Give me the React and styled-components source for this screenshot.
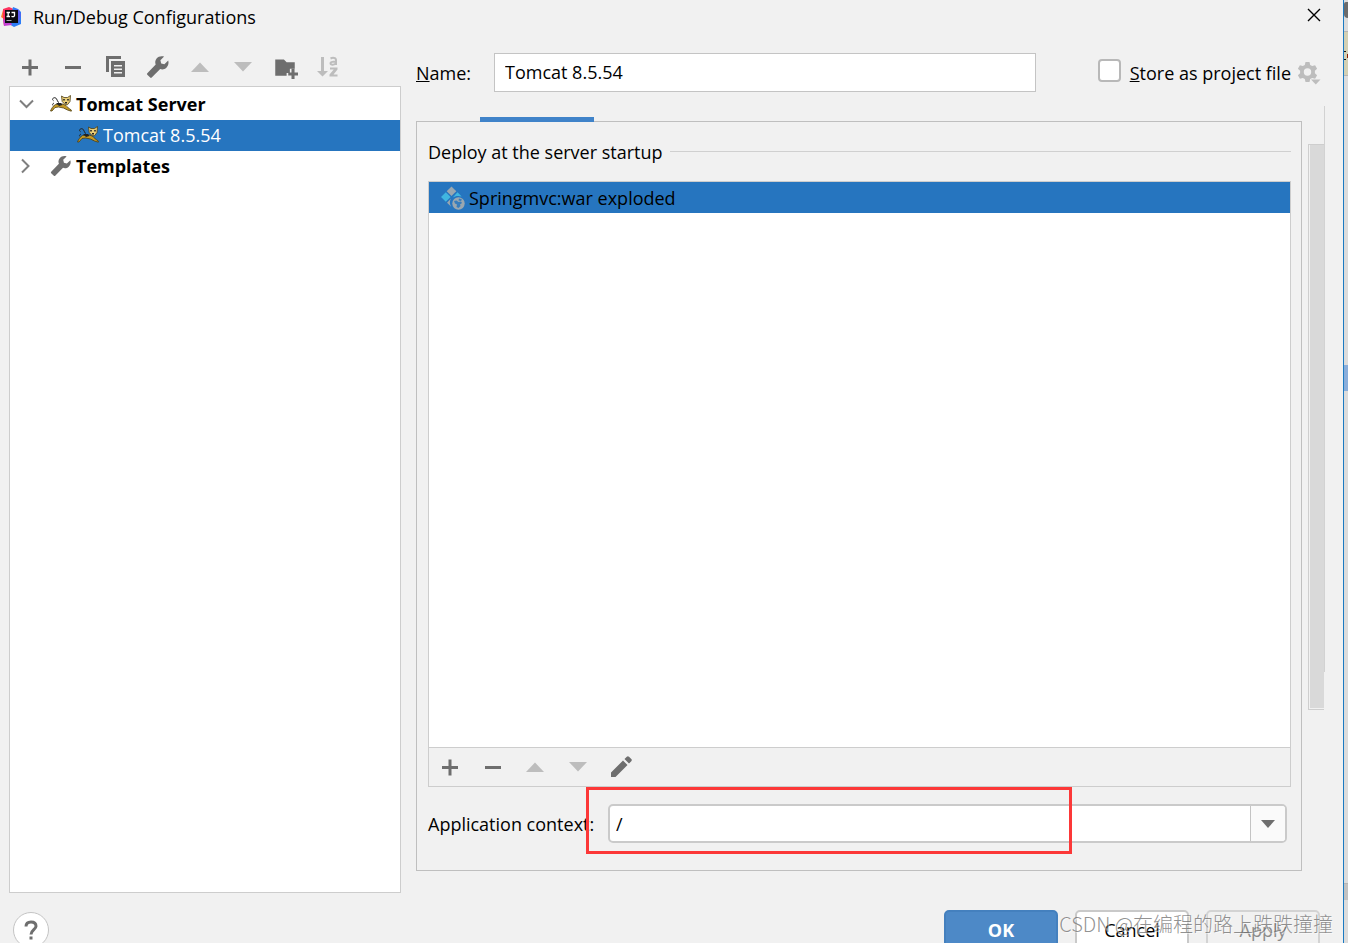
import React, { useState } from 'react'
import styled, { createGlobalStyle } from 'styled-components'

const GlobalStyle = createGlobalStyle`
  * {
    box-sizing: border-box;
  }
  body {
    margin: 0;
    background-color: #f1f1f1;
    font-family: "Open Sans", "Noto Sans", "Noto Sans CJK SC", sans-serif;
    font-size: 18px;
    line-height: 24px;
    color: #000;
  }
  button, input {
    font: inherit;
    color: inherit;
  }
`

const Screen = styled.div`
  display: flex;
  height: 100vh;
  overflow: hidden;
`

const Dialog = styled.div`
  position: relative;
  flex: 1;
  min-width: 0;
  display: flex;
  flex-direction: column;
  background-color: #f1f1f1;
  border-right: 1px solid #1b7ac2;
`

const TitleBar = styled.header`
  display: flex;
  align-items: center;
  gap: 11px;
  height: 34px;
  padding: 0 18px 0 1px;
`

const Title = styled.h1`
  flex: 1;
  margin: 0;
  font-size: 18px;
  font-weight: 400;
`

const IconButton = styled.button`
  display: flex;
  align-items: center;
  justify-content: center;
  padding: 0;
  border: 0;
  background: none;
  color: ${(props) => (props.$muted ? '#bdbdbd' : '#6e6e6e')};
`

const CloseButton = styled(IconButton)`
  height: 22px;
  align-self: flex-start;
  margin-top: 4px;
  color: #000;
`

const Body = styled.main`
  flex: 1;
  min-height: 0;
  display: grid;
  grid-template-columns: 392px 1fr;
  gap: 15px;
  padding: 14px 18px 0 9px;
`

const Sidebar = styled.aside`
  display: flex;
  flex-direction: column;
`

const Toolbar = styled.div`
  display: grid;
  grid-template-columns: repeat(8, 1fr);
  width: 340px;
  height: 38px;
`

const Tree = styled.ul`
  flex: 1;
  margin: 0;
  padding: 2px 0 0;
  list-style: none;
  background-color: #fff;
  border: 1px solid #cdcdcd;
`

const TreeRow = styled.li`
  display: flex;
  align-items: center;
  gap: 4px;
  height: 31px;
  padding: 0 0 1px ${(props) => (props.$child ? '67px' : '8px')};
  font-weight: ${(props) => (props.$child ? 400 : 700)};
  background-color: ${(props) => (props.$selected ? '#2675bf' : 'transparent')};
  color: ${(props) => (props.$selected ? '#fff' : '#000')};
`

const TreeIcon = styled.span`
  display: flex;
  color: #6e6e6e;
`

const Chevron = styled(IconButton)`
  width: 18px;
  margin-right: 10px;
  color: #7f7f7f;
`

const Settings = styled.section`
  display: flex;
  flex-direction: column;
  min-width: 0;
  min-height: 0;
`

const NameRow = styled.div`
  display: flex;
  align-items: center;
  height: 58px;
  padding: 5px 4px 14px 0;
`

const NameLabel = styled.label`
  width: 78px;
`

const NameInput = styled.input`
  flex: 1;
  min-width: 0;
  height: 39px;
  padding: 0 10px 1px;
  background-color: #fff;
  border: 1px solid #c4c4c4;
  outline: 0;
`

const StoreLabel = styled.label`
  display: flex;
  align-items: center;
  gap: 9px;
  margin: 0 6px 0 62px;
  white-space: nowrap;
`

const CheckBox = styled.input`
  appearance: none;
  width: 23px;
  height: 23px;
  margin: 0 0 5px;
  background-color: #fff;
  border: 2px solid #b8b8b8;
  border-radius: 4px;
`

const Pane = styled.div`
  flex: 1;
  min-height: 0;
  display: flex;
  gap: 6px;
  padding-bottom: 22px;
`

const PaneContent = styled.div`
  flex: 1;
  min-width: 0;
  display: flex;
  flex-direction: column;
`

const TabMark = styled.div`
  z-index: 1;
  width: 114px;
  height: 5px;
  margin: 11px 0 -1px 64px;
  background-color: #4083c9;
`

const Panel = styled.div`
  flex: 1;
  min-height: 0;
  display: flex;
  flex-direction: column;
  padding: 0 10px 0 11px;
  border: 1px solid #bfbfbf;
`

const SectionTitle = styled.h2`
  display: flex;
  align-items: center;
  gap: 7px;
  height: 59px;
  margin: 0;
  font-size: 18px;
  font-weight: 400;
  white-space: nowrap;
  &::after {
    content: "";
    flex: 1;
    height: 1px;
    background-color: #d0d0d0;
  }
`

const DeployBox = styled.div`
  flex: 1;
  min-height: 0;
  display: flex;
  flex-direction: column;
  border: 1px solid #cdcdcd;
`

const DeployList = styled.ul`
  flex: 1;
  margin: 0;
  padding: 0;
  list-style: none;
  background-color: #fff;
`

const DeployItem = styled.li`
  display: flex;
  align-items: center;
  gap: 4px;
  height: 31px;
  padding-left: 12px;
  background-color: #2675bf;
`

const DeployToolbar = styled.div`
  display: grid;
  grid-template-columns: repeat(5, 1fr);
  width: 213px;
  height: 38px;
`

const DeployActions = styled.div`
  border-top: 1px solid #cdcdcd;
`

const ContextRow = styled.div`
  position: relative;
  display: flex;
  align-items: center;
  padding: 17px 4px 27px 0;
`

const ContextLabel = styled.label`
  width: 180px;
`

const Combo = styled.div`
  flex: 1;
  display: flex;
  height: 39px;
  overflow: hidden;
  background-color: #fff;
  border: 2px solid #cacaca;
  border-radius: 5px;
`

const ComboInput = styled.input`
  flex: 1;
  min-width: 0;
  padding: 0 6px;
  background: none;
  border: 0;
  outline: 0;
`

const ComboButton = styled(IconButton)`
  width: 35px;
  background-color: #fafafa;
  border-left: 1px solid #c4c4c4;
`

const Highlight = styled.div`
  position: absolute;
  top: 0;
  left: 158px;
  width: 486px;
  height: 67px;
  border: 3px solid #fc3838;
  pointer-events: none;
`

const ScrollTrack = styled.div`
  width: 17px;
  height: 74%;
  padding-top: 38px;
  border-right: 1px solid #d2d2d2;
`

const ScrollThumb = styled.div`
  width: 16px;
  height: 566px;
  background-color: #d9d9d9;
  border: 1px solid #cecece;
  border-width: 1px 0 1px 1px;
  box-shadow: inset 1px -1px 0 #f1f1f1;
`

const Footer = styled.footer`
  display: flex;
  align-items: flex-start;
  gap: 17px;
  height: 50px;
  padding: 17px 23px 0 13px;
  overflow: hidden;
`

const HelpButton = styled.button`
  flex: none;
  display: flex;
  align-items: center;
  justify-content: center;
  width: 36px;
  height: 36px;
  margin: 2px auto 0 0;
  padding: 0;
  background-color: #fff;
  border: 1px solid #c4c4c4;
  border-radius: 50%;
  color: #6e6e6e;
`

const FooterButton = styled.button`
  flex: none;
  width: 114px;
  height: 40px;
  padding: 0;
  background-color: ${(props) => (props.$primary ? '#4d89c7' : '#fff')};
  border: 2px solid ${(props) => (props.$primary ? '#4480be' : '#c9c9c9')};
  border-radius: 5px;
  color: ${(props) => (props.$primary ? '#fff' : '#000')};
  font-weight: ${(props) => (props.$primary ? 700 : 400)};
  &:disabled {
    background-color: #f1f1f1;
    border-color: #d3d3d3;
    color: #8c8c8c;
  }
`

const Watermark = styled.div`
  position: absolute;
  right: 10px;
  bottom: 5px;
  font-family: "Noto Sans CJK SC", sans-serif;
  font-size: 20px;
  line-height: 28px;
  font-weight: 300;
  color: rgba(110, 110, 110, 0.75);
  text-shadow: 1px 1px 0 rgba(255, 255, 255, 0.6);
  white-space: nowrap;
  pointer-events: none;
`

const Behind = styled.div`
  flex: none;
  display: flex;
  flex-direction: column;
  width: 4px;
  background-color: #dcdcdc;
`

const Stripe = styled.div`
  flex: none;
  height: ${(props) => props.$height}px;
  margin-top: ${(props) => props.$gap || 0}px;
  background-color: ${(props) => props.$color};
`

const RoundStripe = styled(Stripe)`
  border-radius: 4px 0 0 8px;
`

const Glyph = ({ size = 24, children }) => (
  <svg width={size} height={size} viewBox="0 0 24 24" fill="currentColor">
    {children}
  </svg>
)

const PlusIcon = () => (
  <Glyph><path d="M10.500 4.500h3v6.500H20v3h-6.500v6.500h-3V14H4v-3h6.500z" /></Glyph>
)

const MinusIcon = () => (
  <Glyph><path d="M4 11h16v3H4z" /></Glyph>
)

const CopyIcon = () => (
  <Glyph>
    <path d="M3 1h15v3H6v13H3z" />
    <path fillRule="evenodd" d="M8 6h14v16H8zM11 10v1.500h8V10zM11 13.500V15h8v-1.500zM11 17v1.500h8V17z" />
  </Glyph>
)

const WrenchIcon = ({ size }) => (
  <Glyph size={size}>
    <path d="M22.200 5.600 18.400 9.200l-3.200-.8-.8-3.100 3.700-3.700C15.400.7 12.300 1.300 10.600 3.500 9.100 5.300 8.900 7.500 9.700 9.500L1.300 18.300c-.5.5-.5 1 0 1.500l2.900 2.800c.5.500 1 .5 1.500 0l8.500-8.600c2.100.8 4.400.4 6.200-1.300 2-1.900 2.600-4.700 1.800-7.100z" />
  </Glyph>
)

const UpIcon = () => (
  <Glyph><path d="M12 7.500 21 17H3z" /></Glyph>
)

const DownIcon = () => (
  <Glyph><path d="M3 7h18l-9 9.500z" /></Glyph>
)

const FolderIcon = () => (
  <Glyph size={26}>
    <path d="M3 5h8l2.500 2.500H21v6h-4.500v4h-3V20H3z" />
    <path d="M18 13.500h2.800V17H24v2.800h-3.200V23H18v-3.200h-3V17h3z" />
  </Glyph>
)

const SortIcon = () => (
  <Glyph>
    <path d="M5 2h3v14h4l-5.500 5.500L1 16h4z" />
    <path d="M14 12.500h7.500v2L17.500 19.500h4v2h-8v-2l4.200-5H14z" />
    <path fill="none" stroke="currentColor" strokeWidth="2" d="M14.500 3.500c2-1 5.500-1 5.500 1.500v5M20 6.500c-3 0-5.500 0-5.500 1.800 0 2.200 4 1.800 5.500-.3" />
  </Glyph>
)

const PencilIcon = () => (
  <Glyph>
    <path d="m14 5.500 4.500 4.500L6.500 22H2v-4.500zM15.500 4l2.300-2.300c.7-.7 1.500-.7 2.200 0L22.300 4c.7.7.7 1.500 0 2.200L20 8.500z" />
  </Glyph>
)

const GearIcon = () => (
  <Glyph>
    <path fillRule="evenodd" d="M8.500 1h4l.7 3 2 1.100 2.900-.9 2 3.500-2.200 2.100v2.400l2.200 2.100-2 3.500-2.900-.9-2 1.100-.7 3h-4l-.7-3-2-1.100-2.900.9-2-3.500 2.200-2.100V9.800L.9 7.700l2-3.500 2.900.9 2-1.100zM10.500 7.300a3.700 3.700 0 1 0 0 7.400 3.700 3.700 0 0 0 0-7.400z" />
    <path d="M14 18.500h9.500L18.800 23.500z" />
  </Glyph>
)

const ChevronIcon = ({ open }) => (
  <svg width="18" height="18" viewBox="0 0 18 18" fill="none" stroke="currentColor" strokeWidth="2">
    <path d={open ? 'M2 5.500 8.500 12l6.500-6.500' : 'M4 2.500 10.500 9 4 15.500'} />
  </svg>
)

const TomcatIcon = () => (
  <svg width="22" height="22" viewBox="0 0 22 22">
    <path fill="none" stroke="#222" strokeWidth="1" d="M9 9.500C7 9.500 7.500 5 5 4.700 3 4.500 1.500 6.500 3.500 7.700M4 10C3 10.500 2 11.500 3 12.500" />
    <path fill="#c49a26" stroke="#4d3d12" strokeWidth=".8" d="M.5 18c1-2.500 2.500-5 5-6.500l7-.5 3 1.200c1.500 1.500 3 3 5.800 4.800v1.200l-3.800-1.200-4-2-5-1-3.500.5-3 3.500z" />
    <path fill="#222" d="M6 10h5l1.500 2L9 13z" />
    <path fill="#e9cd77" stroke="#4d3d12" strokeWidth=".8" d="M11.500 3 14 4.500h3.500l3-2-.5 6-2.500 3.200h-2.200L12.200 8.500z" />
    <path fill="#222" d="M13.200 6h1.600v1.500h-1.600zM17.200 6h1.600v1.500h-1.600zM15 9h2v1.500h-2z" />
  </svg>
)

const ArtifactIcon = () => (
  <svg width="24" height="24" viewBox="0 0 24 24">
    <path fill="#9aa7b0" d="m10.500.5 4.800 4.800-4.800 4.700-4.800-4.700z" />
    <path fill="#40b6e0" d="m4.800 6.200 4.800 4.900-4.800 4.700L0 11.100zM16.500 6.200l4.200 4.300c-3.500-1-6.500-.5-9 1z" />
    <path fill="#9aa7b0" d="M10 12.500c-1.800 3-1.300 5.800.2 8.200L6 16.700z" />
    <circle cx="17.500" cy="17.500" r="6.200" fill="#9aa7b0" />
    <path fill="#2675bf" d="m13 15 2.500-.5 2 1.500 2.500-.5 1 1.500-2 1.500.5 1.500-2 2-2-1 .5-2.500-2-1zM18 12.500l3 1-1 1.500-2.500-.5z" opacity=".85" />
  </svg>
)

const IdeaIcon = () => (
  <svg width="21" height="22" viewBox="0 0 21 22">
    <path fill="#fc7a2e" d="M2 4 0 11l6 4 3-8z" />
    <path fill="#fe315d" d="M2 3 8 1l7 3-5 9-7 7-1-7z" />
    <path fill="#2c7df7" d="m12 1 5 2 3 3v12l-7 3-5-3z" />
    <path fill="#5b5cf0" d="m14 3 4 1 2 5-3 8z" />
    <path fill="#c13fd0" d="m2 13 7 2 2 4-8 1z" />
    <path fill="#0b0b12" d="M4 4h13v13H4z" />
    <path fill="none" stroke="#fff" strokeWidth="1.300" d="M5.500 6.500h3.500M7.200 6.500v4M5.500 10.500h3.500M10.500 6.500h3v3c0 1-1.500 1.500-3 .8" />
    <path fill="#aaa" d="M5.500 14h5v1h-5z" />
  </svg>
)

const App = () => {
  const [name, setName] = useState('Tomcat 8.5.54')
  const [context, setContext] = useState('/')

  return (
    <Screen>
      <GlobalStyle />
      <Dialog>
        <TitleBar>
          <IdeaIcon />
          <Title>Run/Debug Configurations</Title>
          <CloseButton aria-label="Close">
            <svg width="22" height="22" viewBox="0 0 22 22" stroke="currentColor" strokeWidth="1.400">
              <path d="m5 5 12 12M17 5 5 17" />
            </svg>
          </CloseButton>
        </TitleBar>

        <Body>
          <Sidebar>
            <Toolbar>
              <IconButton aria-label="Add"><PlusIcon /></IconButton>
              <IconButton aria-label="Remove"><MinusIcon /></IconButton>
              <IconButton aria-label="Copy"><CopyIcon /></IconButton>
              <IconButton aria-label="Edit templates"><WrenchIcon /></IconButton>
              <IconButton aria-label="Move up" $muted><UpIcon /></IconButton>
              <IconButton aria-label="Move down" $muted><DownIcon /></IconButton>
              <IconButton aria-label="New folder"><FolderIcon /></IconButton>
              <IconButton aria-label="Sort" $muted><SortIcon /></IconButton>
            </Toolbar>
            <Tree>
              <TreeRow>
                <Chevron aria-label="Collapse"><ChevronIcon open /></Chevron>
                <TreeIcon><TomcatIcon /></TreeIcon>
                <span>Tomcat Server</span>
              </TreeRow>
              <TreeRow $child $selected>
                <TreeIcon><TomcatIcon /></TreeIcon>
                <span>Tomcat 8.5.54</span>
              </TreeRow>
              <TreeRow>
                <Chevron aria-label="Expand"><ChevronIcon /></Chevron>
                <TreeIcon><WrenchIcon size={22} /></TreeIcon>
                <span>Templates</span>
              </TreeRow>
            </Tree>
          </Sidebar>

          <Settings>
            <NameRow>
              <NameLabel htmlFor="name"><u>N</u>ame:</NameLabel>
              <NameInput id="name" value={name} onChange={(e) => setName(e.target.value)} />
              <StoreLabel>
                <CheckBox type="checkbox" />
                <span><u>S</u>tore as project file</span>
              </StoreLabel>
              <IconButton aria-label="Storage options" $muted><GearIcon /></IconButton>
            </NameRow>
            <Pane>
              <PaneContent>
                <TabMark />
                <Panel>
                  <SectionTitle>Deploy at the server startup</SectionTitle>
                  <DeployBox>
                    <DeployList>
                      <DeployItem>
                        <ArtifactIcon />
                        <span>Springmvc:war exploded</span>
                      </DeployItem>
                    </DeployList>
                    <DeployActions>
                      <DeployToolbar>
                        <IconButton aria-label="Add artifact"><PlusIcon /></IconButton>
                        <IconButton aria-label="Remove artifact"><MinusIcon /></IconButton>
                        <IconButton aria-label="Move artifact up" $muted><UpIcon /></IconButton>
                        <IconButton aria-label="Move artifact down" $muted><DownIcon /></IconButton>
                        <IconButton aria-label="Edit artifact"><PencilIcon /></IconButton>
                      </DeployToolbar>
                    </DeployActions>
                  </DeployBox>
                  <ContextRow>
                    <ContextLabel htmlFor="context">Application context:</ContextLabel>
                    <Combo>
                      <ComboInput id="context" value={context} onChange={(e) => setContext(e.target.value)} />
                      <ComboButton aria-label="Show contexts">
                        <svg width="14" height="8" viewBox="0 0 14 8" fill="currentColor"><path d="M0 0h14L7 8z" /></svg>
                      </ComboButton>
                    </Combo>
                    <Highlight />
                  </ContextRow>
                </Panel>
              </PaneContent>
              <ScrollTrack>
                <ScrollThumb />
              </ScrollTrack>
            </Pane>
          </Settings>
        </Body>

        <Footer>
          <HelpButton aria-label="Help">
            <svg width="14" height="20" viewBox="0 0 14 20" fill="none" stroke="currentColor" strokeWidth="3">
              <path d="M2 6.500C2 3.500 4 2 7 2s5 1.500 5 4.200c0 3.300-5 3.800-5 8.300M7 16.500v3" />
            </svg>
          </HelpButton>
          <FooterButton $primary>OK</FooterButton>
          <FooterButton>Cancel</FooterButton>
          <FooterButton disabled>Apply</FooterButton>
        </Footer>
        <Watermark>CSDN @在编程的路上跌跌撞撞</Watermark>
      </Dialog>
      <Behind>
        <RoundStripe $height={16} $gap={2} $color="#6b6b6b" />
        <Stripe $height={1} $gap={13} $color="#b5b5b5" />
        <Stripe $height={43} $color="#d3d0b4">
          <svg width="4" height="43" viewBox="0 0 4 43">
            <path fill="#111" d="M0 19h2v1H0zM0 27h2v1H0z" />
            <path fill="#8a1c00" d="M3 22h1v4H3z" />
          </svg>
        </Stripe>
        <Stripe $height={1} $color="#b5b5b5" />
        <Stripe $height={26} $gap={289} $color="#8aaedb" />
        <Stripe $height={1} $gap={492} $color="#b5b5b5" />
        <Stripe $height={16} $color="#c2c2c2" />
      </Behind>
    </Screen>
  )
}

export default App
